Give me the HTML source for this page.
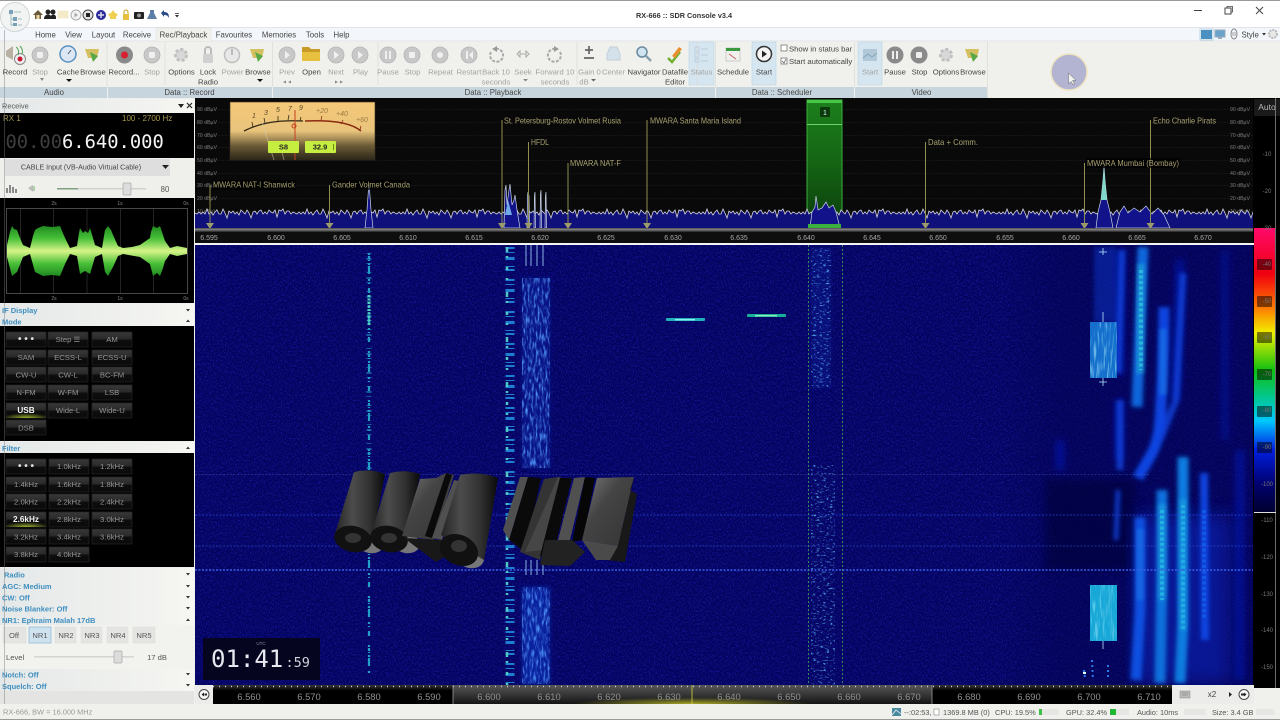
<!DOCTYPE html>
<html><head><meta charset="utf-8"><title>RX-666 :: SDR Console v3.4</title>
<style>
html,body{margin:0;padding:0;width:1280px;height:720px;overflow:hidden;background:#000}
svg{display:block}
text{font-family:"Liberation Sans",sans-serif}
.r{font-size:7.7px;fill:#444;text-anchor:middle}
.d{font-size:7.7px;fill:#a2a2a2;text-anchor:middle}
.g{font-size:7.8px;fill:#444;text-anchor:middle}
.h{font-size:7.5px;font-weight:bold;fill:#3f8fc0}
.b{font-size:7.7px;fill:#949494;text-anchor:middle}
.m{font-size:8.4px;fill:#a8a270}
.db{font-size:5.2px;fill:#7c7c7c}
.f{font-size:7px;fill:#a8a8a8;text-anchor:middle}
.a{font-size:9.4px;fill:#909090;text-anchor:middle}
.s{font-size:7.4px;fill:#555}
.c{font-size:6px;fill:#777;text-anchor:middle}
</style></head><body>
<svg width="1280" height="720" viewBox="0 0 1280 720" xmlns="http://www.w3.org/2000/svg">
<defs>
<linearGradient id="btn" x1="0" y1="0" x2="0" y2="1"><stop offset="0" stop-color="#383838"/><stop offset=".45" stop-color="#2a2a2a"/><stop offset=".55" stop-color="#0e0e0e"/><stop offset="1" stop-color="#0a0a0a"/></linearGradient>
<linearGradient id="hd" x1="0" y1="0" x2="1" y2="0"><stop offset="0" stop-color="#e4e8e8"/><stop offset="1" stop-color="#f6f6f2"/></linearGradient>
<linearGradient id="wave" x1="0" y1="226" x2="0" y2="276" gradientUnits="userSpaceOnUse"><stop offset="0" stop-color="#1f8a20"/><stop offset=".25" stop-color="#48c038"/><stop offset=".5" stop-color="#d8f488"/><stop offset=".75" stop-color="#48c038"/><stop offset="1" stop-color="#1f8a20"/></linearGradient>
<linearGradient id="cbar" x1="0" y1="228" x2="0" y2="512" gradientUnits="userSpaceOnUse">
<stop offset="0" stop-color="#ff0a6a"/><stop offset=".16" stop-color="#f00010"/><stop offset=".28" stop-color="#ff7a00"/><stop offset=".37" stop-color="#f0f000"/><stop offset=".5" stop-color="#10c010"/><stop offset=".62" stop-color="#00c8b0"/><stop offset=".68" stop-color="#00c8ff"/><stop offset=".78" stop-color="#0020e0"/><stop offset=".9" stop-color="#000070"/><stop offset="1" stop-color="#000030"/></linearGradient>
<linearGradient id="meter" x1="0" y1="0" x2="0" y2="1"><stop offset="0" stop-color="#f6c878"/><stop offset=".5" stop-color="#e8c47c"/><stop offset=".75" stop-color="#6e5c38"/><stop offset="1" stop-color="#2a2618"/></linearGradient>
<linearGradient id="grn" x1="0" y1="0" x2="0" y2="1"><stop offset="0" stop-color="#1c801c"/><stop offset=".5" stop-color="#146414"/><stop offset="1" stop-color="#0c3c0c"/></linearGradient>
<linearGradient id="axg" x1="0" y1="0" x2="0" y2="1"><stop offset="0" stop-color="#585858"/><stop offset="1" stop-color="#141414"/></linearGradient>
<linearGradient id="axb" x1="0" y1="0" x2="0" y2="1"><stop offset="0" stop-color="#383838"/><stop offset=".3" stop-color="#000"/><stop offset="1" stop-color="#000"/></linearGradient>
<linearGradient id="shade" x1="0" y1="0" x2="1" y2="0"><stop offset="0" stop-color="#020250" stop-opacity="0"/><stop offset=".25" stop-color="#020250" stop-opacity=".45"/><stop offset="1" stop-color="#020250" stop-opacity=".45"/></linearGradient>
<radialGradient id="yel" cx=".5" cy="1" r=".5"><stop offset="0" stop-color="#a8a828"/><stop offset="1" stop-color="#a8a828" stop-opacity="0"/></radialGradient>
<radialGradient id="act" cx=".5" cy="1" r=".6"><stop offset="0" stop-color="#9db030"/><stop offset="1" stop-color="#9db030" stop-opacity="0"/></radialGradient>
<linearGradient id="cyl" x1="0" y1="0" x2="1" y2="0"><stop offset="0" stop-color="#242424"/><stop offset=".35" stop-color="#4c4c4c"/><stop offset=".7" stop-color="#303030"/><stop offset="1" stop-color="#0a0a0a"/></linearGradient>
<linearGradient id="blk" x1="0" y1="0" x2="1" y2="1"><stop offset="0" stop-color="#7a7a7a"/><stop offset=".4" stop-color="#444"/><stop offset="1" stop-color="#343434"/></linearGradient>
<filter id="nz" x="0" y="0" width="100%" height="100%"><feTurbulence type="fractalNoise" baseFrequency=".75 .55" numOctaves="2" seed="7"/><feColorMatrix values="0 0 0 0 .02  0 0 0 0 .02  0 0 0 0 .62  1.5 0 0 0 -.68"/></filter>
<filter id="nz2" x="0" y="0" width="100%" height="100%"><feTurbulence type="fractalNoise" baseFrequency=".5 .12" numOctaves="2" seed="3"/><feColorMatrix values="0 0 0 0 .08  0 0 0 0 .3  0 0 0 0 .95  2.6 0 0 0 -1.15"/></filter>
<filter id="nz3" x="0" y="0" width="100%" height="100%"><feTurbulence type="fractalNoise" baseFrequency=".55 .05" numOctaves="2" seed="11"/><feColorMatrix values="0 0 0 0 .45  0 0 0 0 .9  0 0 0 0 1  3.5 0 0 0 -1.75"/></filter>
<filter id="nz4" x="0" y="0" width="100%" height="100%"><feTurbulence type="fractalNoise" baseFrequency=".3 .6" numOctaves="2" seed="21"/><feColorMatrix values="0 0 0 0 .1  0 0 0 0 .45  0 0 0 0 .9  4 0 0 0 -2.3"/></filter>
<filter id="bl2"><feGaussianBlur stdDeviation="2"/></filter>
<filter id="bl4"><feGaussianBlur stdDeviation="4"/></filter>
<filter id="bl8"><feGaussianBlur stdDeviation="9"/></filter>
<pattern id="sp" x="195" y="195" width="100" height="33" patternUnits="userSpaceOnUse">
<path d="M0 33V18L2 19 4 17 6 19 8 17 10 19 12 14 14 19 16 17 18 20 20 17 22 15 24 19 26 19 28 14 30 18 32 23 34 16 36 18 38 16 40 19 42 17 44 20 46 15 48 17 50 19 52 15 54 18 56 23 58 17 60 16 62 19 64 16 66 15 68 19 70 17 72 19 74 15 76 17 78 18 80 15 82 22 84 15 86 16 88 14 90 19 92 16 94 16 96 19 98 17 100 18V33z" fill="#10107a"/>
<path d="M0 18L2 19 4 17 6 19 8 17 10 19 12 14 14 19 16 17 18 20 20 17 22 15 24 19 26 19 28 14 30 18 32 23 34 16 36 18 38 16 40 19 42 17 44 20 46 15 48 17 50 19 52 15 54 18 56 23 58 17 60 16 62 19 64 16 66 15 68 19 70 17 72 19 74 15 76 17 78 18 80 15 82 22 84 15 86 16 88 14 90 19 92 16 94 16 96 19 98 17 100 18" fill="none" stroke="#d4d4e0" stroke-width=".8"/>
</pattern>
</defs>

<!-- chrome -->
<rect width="1280" height="720" fill="#f0f0ec"/>
<rect width="1280" height="1" fill="#9a9a9a"/>
<rect y="1" width="1280" height="26" fill="#fff"/>
<rect y="27" width="1280" height="14" fill="#f3f6fb"/>
<rect y="27" width="1280" height=".7" fill="#d8dce0"/>
<rect y="41" width="1280" height="57" fill="#f0f0ec"/>
<rect y="40.500" width="1280" height=".8" fill="#dfe2e6"/>
<rect x="156" y="28" width="55" height="13.500" fill="#f0f0ec" stroke="#e0e0e0" stroke-width=".5"/>
<text x="684" y="18" font-size="7.300" font-weight="bold" fill="#333" text-anchor="middle">RX-666 :: SDR Console v3.4</text>

<!-- orb -->
<circle cx="15" cy="17" r="14.500" fill="#f2f4f4" stroke="#d0d4d6"/>
<g fill="#7aa0b8"><rect x="9" y="10" width="4" height="4"/><rect x="13" y="17" width="4" height="4"/><rect x="13" y="23" width="4" height="3"/></g>
<g stroke="#8aa" stroke-width=".7" fill="none"><path d="M11 14V25H13M11 19H13M14 12H21M18 19H22M18 25H22"/></g>

<!-- QAT -->
<path d="M33 15l5-5 5 5h-2v4h-6v-4z" fill="#6a5a3a"/><rect x="36.500" y="15" width="3" height="4" fill="#e8d8a8"/>
<circle cx="48" cy="12" r="2.500" fill="#222"/><circle cx="53" cy="12" r="2.500" fill="#222"/><path d="M44 19c0-6 8-6 8 0zM50 19c0-6 7-6 6 0z" fill="#222"/>
<rect x="58" y="11" width="10" height="7" fill="#f4ecc8" stroke="#eee2b8" stroke-width=".5"/>
<circle cx="76" cy="15" r="5" fill="#f4f4f4" stroke="#aaa"/><path d="M74.500 12.500l3.500 2.500-3.500 2.500z" fill="#aaa"/>
<circle cx="88" cy="15" r="5" fill="#e4e4e4" stroke="#444"/><rect x="86" y="13" width="4" height="4" fill="#222"/>
<circle cx="101" cy="15" r="5" fill="#2a2a9a"/><path d="M98 15h6M101 12v6" stroke="#dde" stroke-width="1.500"/>
<path d="M113 10l2 3 3 1-2 3v2h-6v-2l-2-3 3-1z" fill="#f0d050"/>
<rect x="123" y="14" width="6" height="6" fill="#e8c040"/><path d="M124 14v-2a2 2 0 014 0v2" fill="none" stroke="#c8a020"/>
<rect x="134" y="12" width="10" height="7" rx="1" fill="#222"/><circle cx="139" cy="15.500" r="2" fill="#999"/>
<path d="M150 10h4v3l3 6h-10l3-6z" fill="#5a7ea8"/>
<path d="M161 13l3-3v2c4 0 5 2 5 6-1-2-2-3-5-3v2z" fill="#2a4a8a"/>
<path d="M175 15h4l-2 2.500z" fill="#333"/><rect x="175" y="13" width="4" height=".8" fill="#333"/>

<!-- tabs -->
<g font-size="7.800" fill="#444" text-anchor="middle">
<text x="45.500" y="37.500">Home</text><text x="73.500" y="37.500">View</text><text x="103.500" y="37.500">Layout</text><text x="137" y="37.500">Receive</text><text x="183.500" y="37.500">Rec/Playback</text><text x="234" y="37.500">Favourites</text><text x="279" y="37.500">Memories</text><text x="315" y="37.500">Tools</text><text x="341.500" y="37.500">Help</text>
</g>
<!-- window btns -->
<path d="M1194 10.500h8" stroke="#444" stroke-width="1"/>
<rect x="1225" y="8" width="6" height="6" fill="#fff" stroke="#444"/><path d="M1227 8v-1.500h5.500v5.500h-1.500" fill="none" stroke="#444" stroke-width=".8"/>
<path d="M1256 7l7 7M1263 7l-7 7" stroke="#444" stroke-width="1"/>
<rect x="1201" y="30" width="11" height="9" fill="#4a90c0"/><rect x="1200" y="29" width="13" height="11" fill="none" stroke="#b8d4e4"/>
<rect x="1215" y="30" width="10" height="7" fill="#6aa4cc" stroke="#9ab"/><rect x="1218" y="37" width="4" height="2" fill="#9ab"/>
<ellipse cx="1234" cy="34" rx="3" ry="5" fill="none" stroke="#888"/><path d="M1232 33h4M1232 35h4" stroke="#888" stroke-width=".7"/>
<text x="1241.500" y="37.500" font-size="7.800" fill="#444">Style</text><path d="M1262 33h4l-2 2.500z" fill="#333"/>
<circle cx="1273" cy="34" r="4" fill="#e8e8e8" stroke="#bbb" stroke-width="2" stroke-dasharray="2 1"/>

<!-- ribbon highlight -->
<rect x="689" y="42" width="25" height="43" fill="#d6e6f0" stroke="#b8d4e4" stroke-width=".6"/>
<rect x="752" y="42" width="24" height="43" fill="#d6e6f0" stroke="#b8d4e4" stroke-width=".6"/>
<rect x="858" y="42" width="24" height="43" fill="#d6e6f0" stroke="#b8d4e4" stroke-width=".6"/>
<!-- group labels -->
<rect y="87" width="107" height="11" fill="#c7d5de"/><rect x="108" y="87" width="164" height="11" fill="#c7d5de"/><rect x="273" y="87" width="442" height="11" fill="#c7d5de"/><rect x="716" y="87" width="138" height="11" fill="#c7d5de"/><rect x="855" y="87" width="132" height="11" fill="#c7d5de"/>
<g stroke="#dcdcd8" stroke-width=".8"><path d="M107 42V87M272.500 42V87M715.500 42V87M854.500 42V87M987.500 42V98M165 42V85M378 42V85M697 42V85M577 42V85"/></g>
<text class="g" x="54" y="95">Audio</text><text class="g" x="189.500" y="95">Data :: Record</text><text class="g" x="493" y="95">Data :: Playback</text><text class="g" x="782" y="95">Data :: Scheduler</text><text class="g" x="921.500" y="95">Video</text>

<!-- ribbon icons -->
<g fill="#c8c8c8" stroke="#b4b4b4" stroke-width=".8">
<circle cx="40" cy="55" r="8"/><circle cx="152" cy="55" r="8"/><circle cx="287" cy="55" r="8"/><circle cx="336" cy="55" r="8"/><circle cx="360" cy="55" r="8"/><circle cx="388" cy="55" r="8"/><circle cx="412" cy="55" r="8"/><circle cx="440" cy="55" r="8"/><circle cx="469" cy="55" r="8"/>
</g>
<g fill="#f0f0f0">
<rect x="37" y="52" width="6" height="6" rx="1"/><rect x="149" y="52" width="6" height="6" rx="1"/><path d="M285 51l5 4-5 4zM334 51l5 4-5 4zM358 51l5 4-5 4z"/><rect x="385" y="51" width="2" height="8"/><rect x="389" y="51" width="2" height="8"/><rect x="409" y="52" width="6" height="6" rx="1"/><circle cx="440" cy="55" r="3"/><path d="M466 51h2v8h-2zM473 51l-4 4 4 4z"/>
</g>
<!-- Record audio -->
<path d="M6 51l7-5v14l-7-4z" fill="#b8b0a0"/><circle cx="20" cy="59" r="5.500" fill="#eee" stroke="#888"/><circle cx="20" cy="59" r="2.500" fill="#c81830"/><path d="M16 47c3 2 3 6 2 8M20 46c2 2 3 5 2 8" stroke="#4aa050" fill="none"/>
<path d="M40 78h4l-2 3z" fill="#888"/>
<!-- cache -->
<circle cx="68" cy="54" r="8" fill="#dbe8f4" stroke="#5a90c0" stroke-width="1.500"/><path d="M68 54l3-4" stroke="#557"/><path d="M66 79h6l-3 3z" fill="#111"/>
<!-- browse -->
<path d="M85 49h14l-2 9h-9z" fill="#d4c060"/><path d="M90 52l8 4-5 6z" fill="#58a848"/>
<path d="M250 49h14l-2 9h-9z" fill="#d4c060"/><path d="M255 52l8 4-5 6z" fill="#58a848"/><path d="M257 79h6l-3 3z" fill="#111"/>
<path d="M965 49h14l-2 9h-9z" fill="#d4c060"/><path d="M970 52l8 4-5 6z" fill="#58a848"/>
<!-- record data -->
<circle cx="124.500" cy="55" r="8.500" fill="#8a8a8a"/><circle cx="124.500" cy="55" r="3.500" fill="#d82030"/>
<!-- options -->
<circle cx="181" cy="55" r="5.500" fill="#d8d8d8" stroke="#c0c0c0" stroke-width="3" stroke-dasharray="3 2"/>
<circle cx="946" cy="55" r="5.500" fill="#d8d8d8" stroke="#c0c0c0" stroke-width="3" stroke-dasharray="3 2"/>
<!-- lock -->
<rect x="203" y="54" width="10" height="9" rx="1" fill="#d0d0d0"/><path d="M205 54v-4a3 3 0 016 0v4" fill="none" stroke="#bbb" stroke-width="2"/>
<!-- power -->
<circle cx="232" cy="55" r="7.500" fill="#e8e8e8" stroke="#c0c0c0" stroke-width="1.500"/><path d="M232 49v6" stroke="#bbb" stroke-width="2"/>
<path d="M283 82l3-1.500v3zM288 82l3-1.500v3z" fill="#888"/><path d="M335 80.500l3 1.500-3 1.500zM340 80.500l3 1.500-3 1.500z" fill="#888"/>
<!-- open -->
<path d="M302 47h7l2 2h9v12h-18z" fill="#c89a28"/><path d="M302 52h18v9h-18z" fill="#e8c040"/>
<!-- back/fwd -->
<path d="M491 52a6.500 6.500 0 104-3" fill="none" stroke="#a8a8a8" stroke-width="2" stroke-dasharray="3 1.500"/><path d="M497 46l-5 3 5 3z" fill="#999"/>
<path d="M560 52a6.500 6.500 0 11-4-3" fill="none" stroke="#a8a8a8" stroke-width="2" stroke-dasharray="3 1.500"/><path d="M554 46l5 3-5 3z" fill="#999"/>
<path d="M517 54l3-3v6zM529 54l-3-3v6z" fill="none" stroke="#aaa"/><path d="M520 54h6" stroke="#aaa"/>
<path d="M523 79h5l-2.500 2.500z" fill="#888"/>
<!-- gain -->
<path d="M585 50h8M589 46v8M584 58h10" stroke="#666" stroke-width="1.700"/>
<path d="M591 79h5l-2.500 2.500z" fill="#666"/>
<!-- center -->
<path d="M607 60v-6l3-7h7l3 7v6z" fill="#d4e0ea" stroke="#c4d0d8"/>
<!-- nav -->
<circle cx="642" cy="52" r="5" fill="#cfe4f0" stroke="#6a8aa0" stroke-width="1.500"/><path d="M646 56l5 5" stroke="#8aa0b0" stroke-width="2.500"/>
<!-- editor -->
<path d="M668 58l4 4 8-10" fill="none" stroke="#70b030" stroke-width="2.500"/><path d="M672 56l7-9 3 2-7 9z" fill="#e89030"/>
<!-- status -->
<g fill="none" stroke="#bcd" stroke-width=".9"><rect x="695" y="47" width="4" height="4"/><rect x="695" y="53" width="4" height="4"/><rect x="695" y="59" width="4" height="3"/><path d="M701 49h7M701 55h7M701 61h7"/></g>
<!-- schedule -->
<rect x="726" y="48" width="14" height="13" fill="#f2f0ee" stroke="#aaa" stroke-width=".5"/><rect x="726" y="48" width="14" height="3" fill="#3a9a40"/><path d="M729 54l7 5" stroke="#c06060"/>
<circle cx="764" cy="54" r="7.500" fill="#f4f4f4" stroke="#333" stroke-width="1.500"/><path d="M762 50.500l5 3.500-5 3.500z" fill="#222"/>
<!-- checks -->
<rect x="781" y="45" width="6" height="6" fill="#fff" stroke="#666" stroke-width=".7"/><rect x="781" y="58" width="6" height="6" fill="#fff" stroke="#666" stroke-width=".7"/><path d="M782 61l2 2 2-4" fill="none" stroke="#555" stroke-width=".7"/>
<text x="789" y="51.500" font-size="7.700" fill="#444">Show in status bar</text><text x="789" y="64" font-size="7.700" fill="#444">Start automatically</text>
<!-- video -->
<rect x="863" y="49" width="14" height="12" fill="#b0c8d8"/><path d="M863 58l5-4 4 3 5-4" stroke="#8aa8b8" fill="none"/>
<circle cx="895" cy="55" r="8.500" fill="#8a8a8a"/><rect x="892" y="51" width="2" height="8" fill="#eee"/><rect x="896" y="51" width="2" height="8" fill="#eee"/>
<circle cx="919" cy="55" r="8.500" fill="#8a8a8a"/><rect x="916" y="52" width="6" height="6" rx="1" fill="#eee"/>

<!-- ribbon text -->
<text class="r" x="15" y="74.500">Record</text><text class="d" x="40" y="74.500">Stop</text><text class="r" x="68" y="74.500">Cache</text><text class="r" x="93" y="74.500">Browse</text>
<text class="r" x="124" y="74.500">Record...</text><text class="d" x="152" y="74.500">Stop</text><text class="r" x="181.500" y="74.500">Options</text><text class="r" x="208" y="74.500">Lock</text><text class="r" x="208" y="84.500">Radio</text><text class="d" x="232.500" y="74.500">Power</text><text class="r" x="258" y="74.500">Browse</text>
<text class="d" x="287" y="74.500">Prev</text><text class="r" x="311.500" y="74.500">Open</text><text class="d" x="336" y="74.500">Next</text><text class="d" x="360.500" y="74.500">Play</text><text class="d" x="388" y="74.500">Pause</text><text class="d" x="412.500" y="74.500">Stop</text><text class="d" x="440.500" y="74.500">Repeat</text><text class="d" x="469" y="74.500">Restart</text>
<text class="d" x="496" y="74.500">Back 10</text><text class="d" x="496" y="84.500">seconds</text><text class="d" x="523" y="74.500">Seek</text><text class="d" x="555" y="74.500">Forward 10</text><text class="d" x="555" y="84.500">seconds</text><text class="d" x="589.500" y="74.500">Gain 0</text><text class="d" x="584" y="84.500">dB</text><text class="d" x="613.500" y="74.500">Center</text><text class="r" x="644" y="74.500">Navigator</text><text class="r" x="675" y="74.500">Datafile</text><text class="r" x="675" y="84.500">Editor</text><text class="d" x="701.500" y="74.500">Status</text>
<text class="r" x="733" y="74.500">Schedule</text><text class="r" x="764" y="74.500">Start</text>
<text class="d" x="870" y="74.500">Start</text><text class="r" x="895" y="74.500">Pause</text><text class="r" x="919.500" y="74.500">Stop</text><text class="r" x="946" y="74.500">Options</text><text class="r" x="973" y="74.500">Browse</text>

<!-- cursor circle -->
<circle cx="1069" cy="72" r="18" fill="#b2b4d2" stroke="#efe4c0" stroke-width="1.500"/>
<path d="M1068.500 73v11l2.500-2.500 2 3.500 1.500-1-2-3.500h3.500z" fill="#f2f2f2" stroke="#666" stroke-width=".5"/>

<!-- main black -->
<rect x="195" y="98" width="1085" height="590" fill="#000"/>
<rect x="195" y="98" width="1058" height="130" fill="#090909"/>

<!-- spectrum grid -->
<g stroke="#2a2a2a" stroke-width=".6" stroke-dasharray="1.500 1.500"><path d="M195 109.500H1253M195 122.500H1253M195 135.500H1253M195 147.500H1253M195 160.500H1253M195 173.500H1253M195 185.500H1253M195 198.500H1253M195 211.500H1253"/></g>
<g>
<text class="db" x="197" y="111">90 dBµV</text><text class="db" x="197" y="124">80 dBµV</text><text class="db" x="197" y="137">70 dBµV</text><text class="db" x="197" y="149">60 dBµV</text><text class="db" x="197" y="162">50 dBµV</text><text class="db" x="197" y="175">40 dBµV</text><text class="db" x="197" y="187">30 dBµV</text><text class="db" x="197" y="200">20 dBµV</text><text class="db" x="197" y="213">10 dBµV</text>
<text class="db" x="1230" y="111">90 dBµV</text><text class="db" x="1230" y="124">80 dBµV</text><text class="db" x="1230" y="137">70 dBµV</text><text class="db" x="1230" y="149">60 dBµV</text><text class="db" x="1230" y="162">50 dBµV</text><text class="db" x="1230" y="175">40 dBµV</text><text class="db" x="1230" y="187">30 dBµV</text><text class="db" x="1230" y="200">20 dBµV</text><text class="db" x="1230" y="213">10 dBµV</text><text class="db" x="1234" y="225">0 dBµV</text>
</g>

<!-- green filter behind -->
<rect x="807" y="100" width="35" height="128" fill="url(#grn)" stroke="#3cb03c" stroke-width="1"/>
<rect x="807" y="100" width="35" height="3" fill="#46c846"/>
<rect x="807" y="124" width="35" height="1" fill="#70d070"/>
<rect x="820" y="107" width="10" height="10" rx="1" fill="#0c3a0c"/><text x="825" y="115" font-size="7" fill="#cfe" text-anchor="middle">1</text>

<!-- spectrum -->
<rect x="195" y="195" width="1058" height="33" fill="url(#sp)"/>
<g fill="#12128a" stroke="#c8d4e4" stroke-width=".7">
<path d="M365 228L367 210 368 196 369 183 370 196 371 210 373 228z"/>
<path d="M504 228L505 190 506 185 507 205 509 190 510 184 512 205 514 200 515 195 517 210 520 228z"/>
<path d="M527 228L527.500 196 528 192 529 196 529.500 228zM534 228L534.500 196 535 192 535.500 228zM540 228L540.500 194 541 190 541.500 228zM545 228L545.500 196 546 192 546.500 228z"/>
<path d="M810 228L812 212 815 207 816 196 818 210 822 208 826 202 829 208 833 205 836 212 840 228z"/>
<path d="M1096 228L1098 212 1101 200 1103 180 1104 166 1105 180 1107 200 1110 212 1113 228z"/>
<path d="M1116 228L1120 212 1124 206 1128 213 1134 208 1140 212 1146 206 1152 214 1158 208 1164 215 1170 228z"/>
</g>
<path d="M1101 200L1103 180 1104 166 1105 180 1107 200z" fill="#7fd8c8"/>
<path d="M505 215L508 200 512 215z" fill="#70a8e8"/>

<!-- markers -->
<g stroke="#8f8f50" stroke-width="1" fill="none">
<path d="M210 185V224M329.500 185V224M502 120V224M528.500 142V224M568 163V224M647 120V224M925.500 142V224M1084.500 163V224M1150.500 120V224"/>
</g>
<g fill="#9a9a6a">
<path d="M206 223h8l-4 6zM325.500 223h8l-4 6zM498 223h8l-4 6zM524.500 223h8l-4 6zM564 223h8l-4 6zM643 223h8l-4 6zM921.500 223h8l-4 6zM1080.500 223h8l-4 6zM1146.500 223h8l-4 6z"/>
</g>
<rect x="212" y="180" width="84" height="10" fill="#000" opacity=".7"/>
<rect x="331" y="180" width="80" height="10" fill="#000" opacity=".7"/>
<rect x="1086" y="158" width="94" height="10" fill="#000" opacity=".7"/>
<text class="m" x="213" y="187.500" textLength="82" lengthAdjust="spacingAndGlyphs">MWARA NAT-I Shanwick</text>
<text class="m" x="332" y="187.500" textLength="78" lengthAdjust="spacingAndGlyphs">Gander Volmet Canada</text>
<text class="m" x="504" y="123.500" textLength="117" lengthAdjust="spacingAndGlyphs">St. Petersburg-Rostov Volmet Rusia</text>
<text class="m" x="531" y="145" textLength="18" lengthAdjust="spacingAndGlyphs">HFDL</text>
<text class="m" x="570" y="166" textLength="51" lengthAdjust="spacingAndGlyphs">MWARA NAT-F</text>
<text class="m" x="650" y="123.500" textLength="91" lengthAdjust="spacingAndGlyphs">MWARA Santa Maria Island</text>
<text class="m" x="928" y="145" textLength="50" lengthAdjust="spacingAndGlyphs">Data + Comm.</text>
<text class="m" x="1087" y="166" textLength="92" lengthAdjust="spacingAndGlyphs">MWARA Mumbai (Bombay)</text>
<text class="m" x="1153" y="123.500" textLength="63" lengthAdjust="spacingAndGlyphs">Echo Charlie Pirats</text>
<rect x="808" y="224" width="33" height="4" fill="#3cb03c"/>

<!-- S meter -->
<rect x="230" y="102" width="145" height="58" fill="url(#meter)" stroke="#3a3020" stroke-width=".6"/>
<path d="M244 131C262 122 280 120 303 121" fill="none" stroke="#332a18" stroke-width="1.300"/>
<path d="M305 121C330 120 350 122 361 131" fill="none" stroke="#8a2a10" stroke-width="1.500"/>
<path d="M253 127l-1-5M265 123l-1-5M278 121v-5M288 120l1-5M300 121l1-4" stroke="#332a18" stroke-width=".8"/>
<path d="M321 120l1-4M341 124l2-4M360 130l1-4" stroke="#8a2a10" stroke-width=".8"/>
<g font-size="7" font-style="italic" fill="#5a4a28"><text x="252" y="118">1</text><text x="264" y="115">3</text><text x="276" y="112">5</text><text x="288" y="111">7</text><text x="299" y="110">9</text><text x="316" y="113" fill="#9a7a40">+20</text><text x="336" y="116" fill="#9a7a40">+40</text><text x="356" y="122" fill="#9a7a40">+60</text></g>
<path d="M295 160l0-50" stroke="#c84020" stroke-width="1"/><circle cx="294" cy="126" r="2" fill="none" stroke="#c84020" stroke-width="1"/>
<path d="M262 122l12 38M284 160l-2-8" stroke="#d0d0b0" stroke-width="1" opacity=".5"/>
<rect x="268" y="141" width="31" height="12" rx="1" fill="#c6ee40"/><text x="283.500" y="149.500" font-size="7.500" font-weight="bold" fill="#222" text-anchor="middle">S8</text>
<rect x="305" y="141" width="31" height="12" rx="1" fill="#c6ee40"/><text x="320" y="149.500" font-size="7.500" font-weight="bold" fill="#222" text-anchor="middle">32.9</text><path d="M333.500 144v6" stroke="#6a8a20"/>

<!-- freq axis -->
<rect x="195" y="228" width="1058" height="15" fill="#0e0e0e"/>
<rect x="195" y="228" width="1058" height="3.500" fill="#5c5c5c"/>
<rect x="195" y="229" width="1058" height="1" fill="#aaa" opacity=".4"/>
<g>
<text class="f" x="209" y="240">6.595</text><text class="f" x="276" y="240">6.600</text><text class="f" x="342" y="240">6.605</text><text class="f" x="408" y="240">6.610</text><text class="f" x="474" y="240">6.615</text><text class="f" x="540" y="240">6.620</text><text class="f" x="606" y="240">6.625</text><text class="f" x="673" y="240">6.630</text><text class="f" x="739" y="240">6.635</text><text class="f" x="806" y="240">6.640</text><text class="f" x="872" y="240">6.645</text><text class="f" x="938" y="240">6.650</text><text class="f" x="1005" y="240">6.655</text><text class="f" x="1071" y="240">6.660</text><text class="f" x="1137" y="240">6.665</text><text class="f" x="1203" y="240">6.670</text>
</g>
<rect x="195" y="243" width="1059" height="2" fill="#f4f4f4"/>

<!-- waterfall -->
<rect x="195" y="245" width="1058" height="440" fill="#03035e"/>
<rect x="195" y="245" width="1058" height="440" filter="url(#nz)"/>
<rect x="1000" y="245" width="253" height="440" fill="url(#shade)"/>
<rect x="1045" y="480" width="90" height="90" fill="#010130" opacity=".5" filter="url(#bl4)"/>
<g stroke="#0a1ee0" fill="none" filter="url(#bl4)">
<path d="M1120 250V375M1119 400V460M1060 440V470M1240 450V680M1180 260L1175 400" stroke-width="6" opacity=".6"/>
<path d="M1225 250V440" stroke-width="8" opacity=".3"/>
</g>
<rect x="1135" y="515" width="95" height="168" fill="#0828c0" opacity=".55" filter="url(#bl8)"/>
<!-- wavy bands -->
<g fill="none" stroke="#0a44e0" stroke-width="11" filter="url(#bl2)">
<path d="M1143 247C1141 290 1140 340 1137 407" stroke="#1066dc"/>
<path d="M1164 307C1164 350 1162 390 1160 420S1150 455 1138 478"/>
<path d="M1140 517V610L1136 680" stroke="#0c50e0"/>
<path d="M1162 490V573L1160 683" stroke="#1070dc"/>
<path d="M1183 457V623L1180 683" stroke="#107ce0"/>
<path d="M1204 473L1205 640" stroke-width="8"/>
<path d="M1183 273L1176 400 1160 440" stroke-width="7" opacity=".8"/>
<path d="M1122 250L1118 373" stroke-width="7" opacity=".8"/>
<path d="M1120 400V470" stroke-width="7" opacity=".8"/>
<path d="M1118 490L1116 540" stroke-width="5" opacity=".8"/>
</g>
<g fill="none" stroke-width="7" stroke-dasharray="3 2.500" filter="url(#bl2)" opacity=".9">
<path d="M1141 265C1140 300 1140 340 1140 375" stroke="#28c0d8"/>
<path d="M1163 330V395" stroke="#1c90e8"/>
<path d="M1162 505V600" stroke="#20b8e0"/>
<path d="M1183 500V630" stroke="#1cacde"/>
<path d="M1140 530V600" stroke="#1a80e8"/>
</g>
<g fill="none" stroke-width="4" stroke-dasharray="3 2.500" opacity=".7">
<path d="M1141 270V370" stroke="#30c8e0"/>
<path d="M1162 510V600" stroke="#28c0e8"/>
<path d="M1183 505V630" stroke="#28b8e8"/>
<path d="M1204 510V620" stroke="#1464e8"/>
</g>
<!-- block signals -->
<rect x="1090" y="322" width="27" height="56" fill="#1470cc"/>
<rect x="1090" y="322" width="27" height="56" filter="url(#nz3)" opacity=".55"/>
<rect x="1090" y="585" width="27" height="56" fill="#18a8d8"/>
<rect x="1090" y="585" width="27" height="56" filter="url(#nz3)" opacity=".5"/>
<rect x="1094" y="247" width="22" height="75" fill="#0a3ad0" opacity=".45" filter="url(#bl2)"/>
<path d="M1103 248v7M1099 252h8M1103 312v10M1103 378v8M1099 382h8M1103 641v8" stroke="#b8e8ff" stroke-width=".8"/>
<path d="M1092 660l1 20M1084 670l1 8M1108 665v14" stroke="#2a7ae8" stroke-width="2" stroke-dasharray="2 3"/>
<rect x="1083" y="672" width="3" height="2" fill="#dff"/>
<!-- horizontal lines -->
<g stroke-dasharray="2 1.500" fill="none">
<path d="M195 474.500H1150" stroke="#6a88d8" stroke-width=".6" opacity=".55"/>
<path d="M195 515H1253" stroke="#2a50e8" stroke-width="1.200" opacity=".5"/>
<path d="M195 546H1253" stroke="#3a60e8" stroke-width="1" opacity=".5"/>
<path d="M195 570H1253" stroke="#3a60e8" stroke-width="1.700" opacity=".85"/>
</g>
<!-- 6.580 signal -->
<path d="M369 253V675" stroke="#22a0c8" stroke-width="2.200" stroke-dasharray="2 1 3 1 1 2 2 1 8 5 2 2 1 4 5 9"/>
<path d="M369 253V470" stroke="#2090c4" stroke-width="5" stroke-dasharray="1 4 2 3 1 8" opacity=".6"/>
<path d="M369 295v30" stroke="#50d0c0" stroke-width="3" stroke-dasharray="2 1.500"/>
<!-- 6.617 signals -->
<path d="M510 247V685" stroke="#1c80d0" stroke-width="9" stroke-dasharray="2 3 1 4 3 6 1 2 2 8"/>
<path d="M507 247V685" stroke="#50c8c8" stroke-width="2.500" stroke-dasharray="5 4 2 9 3 8 2 12"/>
<path d="M526 245V266M531 245V266M537 245V266M543 245V266" stroke="#9ac4f0" stroke-width=".9"/>
<path d="M526 560V575M531 560V575M537 560V575M543 560V575" stroke="#9ac4f0" stroke-width=".9"/>
<rect x="522" y="278" width="28" height="190" fill="#0a2cb0" opacity=".4" filter="url(#bl2)"/>
<rect x="522" y="278" width="28" height="190" filter="url(#nz2)"/>
<rect x="522" y="587" width="28" height="97" fill="#0a38c8" opacity=".55" filter="url(#bl2)"/>
<rect x="522" y="587" width="28" height="97" filter="url(#nz2)"/>
<!-- short carriers -->
<rect x="666" y="318" width="39" height="3" fill="#20b0b8" rx="1"/><rect x="675" y="319" width="20" height="1.400" fill="#8ee"/>
<rect x="747" y="314" width="39" height="3" fill="#18b098" rx="1"/><rect x="755" y="315" width="22" height="1.400" fill="#8eb"/>
<!-- 6.640 -->
<rect x="811" y="248" width="20" height="140" fill="#0a28a0" opacity=".3" filter="url(#bl2)"/>
<rect x="811" y="248" width="20" height="140" filter="url(#nz4)"/>
<rect x="811" y="465" width="24" height="220" filter="url(#nz4)"/>
<path d="M808.500 245V685M842.500 245V685" stroke="#3fa860" stroke-width=".8" stroke-dasharray="2 2"/>

<!-- 3D logo -->
<g>
<ellipse cx="370" cy="543" rx="14" ry="10" fill="#777" transform="rotate(12 370 543)"/>
<ellipse cx="406" cy="543" rx="14" ry="10" fill="#777" transform="rotate(12 406 543)"/>
<ellipse cx="470" cy="558" rx="14" ry="10" fill="#777" transform="rotate(12 470 558)"/>
<path d="M354 472Q370 468 385 474L372 540 335 534z" fill="url(#cyl)"/>
<ellipse cx="353" cy="539" rx="19" ry="13" fill="#111" transform="rotate(12 353 539)"/><ellipse cx="353" cy="538" rx="8" ry="5" fill="#333"/>
<path d="M390 473Q405 469 420 474L407 540 371 534z" fill="url(#cyl)"/>
<ellipse cx="389" cy="539" rx="19" ry="13" fill="#111" transform="rotate(12 389 539)"/><ellipse cx="389" cy="538" rx="8" ry="5" fill="#333"/>
<path d="M420 479L436 478 446 473 454 475 434 540 402 536z" fill="url(#blk)"/>
<path d="M446 473L452 475 432 538 425 536z" fill="#0a0a0a"/>
<path d="M454 480L459 481 442 540 432 538z" fill="#505050"/>
<path d="M404 538L442 540 446 556 436 562 420 550z" fill="#181818"/>
<path d="M460 475Q480 471 498 478L484 560 441 535z" fill="url(#cyl)"/>
<ellipse cx="459" cy="550" rx="20" ry="15" fill="#111" transform="rotate(25 459 550)"/><ellipse cx="459" cy="546" rx="8" ry="6" fill="#333"/>
<path d="M520 477L528 477 509 540 503 530z" fill="#505050"/>
<path d="M528 477L541 478 525 552 509 540z" fill="#0a0a0a"/>
<path d="M544 479L558 477 540 560 520 552z" fill="#343434"/>
<path d="M558 477L572 480 566 490 560 490 556 495 543 550 525 552z" fill="#464646"/>
<path d="M560 478H572L552 560 540 556z" fill="#0a0a0a"/>
<path d="M574 478L585 477 570 540 558 540z" fill="#505050"/>
<path d="M585 477L595 478 583 540 572 542z" fill="#060606"/>
<path d="M597 478L634 477 618 546 582 540z" fill="url(#blk)"/>
<path d="M634 477L630 490 637 494 625 562 606 560 618 546z" fill="#181818"/>
<path d="M545 540L572 540 585 552 570 566 540 565z" fill="#222"/>
<path d="M582 540L618 546 610 560 596 560z" fill="#4a4a4a"/>
</g>

<!-- clock -->
<rect x="203" y="638" width="117" height="42" rx="1" fill="#050520"/>
<text x="261" y="645" font-size="4.500" fill="#889" text-anchor="middle">UTC</text>
<text x="211" y="667" style="font-family:'DejaVu Sans Mono',monospace" font-size="24" fill="#e8e8f0">01:41</text>
<text x="285.500" y="667" style="font-family:'DejaVu Sans Mono',monospace" font-size="13.500" fill="#d0d0d8">:59</text>

<!-- right scale -->
<rect x="1254" y="98" width="26" height="590" fill="#000"/>
<rect x="1254" y="228" width="21" height="284" fill="url(#cbar)"/>
<rect x="1254" y="99" width="26" height="17" fill="#1a1a1a"/>
<text x="1267" y="110" font-size="8.500" fill="#b8b8b8" text-anchor="middle">Auto</text>
<path d="M1275.500 98V688" stroke="#888" stroke-width=".8"/>
<rect x="1254" y="512" width="22" height="1" fill="#ddd"/>
<g fill="#000" opacity=".5"><rect x="1257" y="259" width="15" height="11" rx="1"/><rect x="1257" y="296" width="15" height="11" rx="1"/><rect x="1257" y="332" width="15" height="11" rx="1"/><rect x="1257" y="369" width="15" height="11" rx="1"/><rect x="1257" y="406" width="15" height="11" rx="1"/><rect x="1257" y="442" width="15" height="11" rx="1"/></g>
<g>
<text class="c" x="1267" y="156">-10</text><text class="c" x="1267" y="193">-20</text><text class="c" x="1267" y="230">-30</text><text class="c" x="1267" y="266">-40</text><text class="c" x="1267" y="303">-50</text><text class="c" x="1267" y="339">-60</text><text class="c" x="1267" y="376">-70</text><text class="c" x="1267" y="412">-80</text><text class="c" x="1267" y="449">-90</text><text class="c" x="1267" y="486">-100</text><text class="c" x="1267" y="522">-110</text><text class="c" x="1267" y="559">-120</text><text class="c" x="1267" y="596">-130</text><text class="c" x="1267" y="632">-140</text><text class="c" x="1267" y="669">-150</text>
</g>

<!-- bottom axis -->
<rect x="195" y="685" width="18" height="19" fill="#ececea"/>
<circle cx="204" cy="694.500" r="5" fill="#f8f8f8" stroke="#444" stroke-width="1"/><path d="M201.500 694.500l2.500-2v4zM204.500 693.500h2.500v2h-2.500z" fill="#222"/>
<rect x="213" y="685" width="240" height="19" fill="url(#axb)"/>
<rect x="453" y="685" width="479" height="19" fill="url(#axg)"/>
<rect x="932" y="685" width="240" height="19" fill="url(#axb)"/>
<rect x="572" y="691" width="240" height="13" fill="url(#yel)"/>
<rect x="1172" y="685" width="82" height="19" fill="#ececea"/>
<path d="M213 686.500H1172" stroke="#c8c8c8" stroke-width="1.500" stroke-dasharray="1 5"/>
<path d="M453 685V704M932 685V704" stroke="#999" stroke-width=".8"/><path d="M692 685V704" stroke="#c8c840" stroke-width=".9"/>
<g>
<text class="a" x="249" y="700">6.560</text><text class="a" x="309" y="700">6.570</text><text class="a" x="369" y="700">6.580</text><text class="a" x="429" y="700">6.590</text><text class="a" x="489" y="700">6.600</text><text class="a" x="549" y="700">6.610</text><text class="a" x="609" y="700">6.620</text><text class="a" x="669" y="700">6.630</text><text class="a" x="729" y="700">6.640</text><text class="a" x="789" y="700">6.650</text><text class="a" x="849" y="700">6.660</text><text class="a" x="909" y="700">6.670</text><text class="a" x="969" y="700">6.680</text><text class="a" x="1029" y="700">6.690</text><text class="a" x="1089" y="700">6.700</text><text class="a" x="1149" y="700">6.710</text>
</g>
<rect x="1180" y="691" width="10" height="7" fill="#bbb" stroke="#888" stroke-width=".5"/><path d="M1182 693h6M1182 695h6" stroke="#777" stroke-width=".6"/>
<text x="1212" y="697" font-size="8" fill="#444" text-anchor="middle">x2</text>
<path d="M1229 692l3 2.500-3 2.500z" fill="#222"/>
<circle cx="1244" cy="694.500" r="5" fill="#f8f8f8" stroke="#444" stroke-width="1"/><path d="M1246.500 694.500l-2.500-2v4zM1241 693.500h3v2h-3z" fill="#222"/>

<!-- LEFT PANEL -->
<rect x="0" y="98" width="194" height="606" fill="#efefeb"/>
<rect x="0" y="99" width="194" height="14" fill="url(#hd)"/>
<text x="2" y="108.500" font-size="7.400" fill="#555">Receive</text>
<path d="M178 104h6l-3 4z" fill="#222"/><path d="M187 103l5 5M192 103l-5 5" stroke="#222" stroke-width="1.200"/>
<rect x="0" y="113" width="194" height="45" fill="#000"/>
<text x="3" y="121" font-size="8" fill="#a89a50">RX 1</text>
<text x="122" y="121" font-size="8" fill="#a89a50">100 - 2700 Hz</text>
<text x="5.500" y="148" style="font-family:'DejaVu Sans Mono',monospace" font-size="18.800" fill="#3e3e3e">00.00</text>
<text x="62" y="148" style="font-family:'DejaVu Sans Mono',monospace" font-size="18.800" fill="#f4f4f4">6.640.000</text>
<rect x="5" y="159" width="165" height="17" fill="#dedede"/>
<text x="81" y="169.500" font-size="7.100" fill="#444" text-anchor="middle">CABLE Input (VB-Audio Virtual Cable)</text>
<path d="M162 165h7l-3.500 4z" fill="#222"/>
<path d="M7 193v-5M10 193v-8M13 193v-6M16 193v-4" stroke="#888" stroke-width="2"/>
<path d="M28 188l5-3v7z" fill="#bbb"/><path d="M34 186v5" stroke="#6ab06a"/>
<rect x="57" y="188" width="89" height="1.500" fill="#d0d0d0"/><rect x="57" y="188" width="21" height="1.500" fill="#80a080"/>
<rect x="123" y="183" width="8" height="12" rx="1" fill="#dcdcdc" stroke="#aaa" stroke-width=".7"/>
<text x="165" y="192" font-size="7.800" fill="#555" text-anchor="middle">80</text>

<rect x="0" y="198" width="194" height="105" fill="#000"/>
<rect x="6.500" y="208.500" width="181" height="85" fill="none" stroke="#5a5a5a" stroke-width=".8"/>
<path d="M20.500 209V293M53.500 209V293M87 209V293M120.500 209V293M153.500 209V293" stroke="#333" stroke-width=".7"/>
<g font-size="5" fill="#888" text-anchor="middle"><text x="54" y="205">2s</text><text x="120" y="205">1s</text><text x="186" y="205">0s</text><text x="54" y="300">2s</text><text x="120" y="300">1s</text><text x="186" y="300">0s</text></g>
<path d="M7 245L10 232 12 226 14 229 17 230 20 238 23 245 30 248 33 236 35 230 38 228 43 226 52 227 60 226 62 231 65 238 70 248 77 246 79 233 80 228 83 233 85 231 88 233 90 228 93 238 95 245 102 248 104 236 105 230 108 226 111 230 113 235 118 246 123 248 132 247 140 245 150 238 151 232 153 226 157 228 160 226 163 235 165 241 170 248 177 246 187 248V254L177 256 170 254 165 261 163 268 160 276 157 273 153 276 150 264 140 257 123 254 118 256 113 267 108 276 105 272 102 254 95 257 90 274 85 271 80 274 77 256 70 254 65 264 60 276 52 275 43 276 35 272 30 254 23 257 17 272 12 276 7 257z" fill="url(#wave)"/>

<!-- sections -->
<rect x="0" y="303.500" width="194" height="23" fill="url(#hd)"/>
<text class="h" x="2" y="313">IF Display</text><text class="h" x="2" y="324.500">Mode</text>
<path d="M186 309h4l-2 2.500z" fill="#333"/><path d="M186 322h4l-2-2.500z" fill="#333"/>
<rect x="0" y="326" width="194" height="115" fill="#000"/>
<g fill="url(#btn)" stroke="#262626" stroke-width=".7">
<rect x="6" y="332" width="40" height="15"/><rect x="48" y="332" width="40" height="15"/><rect x="92" y="332" width="40" height="15"/>
<rect x="6" y="350" width="40" height="15"/><rect x="48" y="350" width="40" height="15"/><rect x="92" y="350" width="40" height="15"/>
<rect x="6" y="367" width="40" height="15"/><rect x="48" y="367" width="40" height="15"/><rect x="92" y="367" width="40" height="15"/>
<rect x="6" y="385" width="40" height="15"/><rect x="48" y="385" width="40" height="15"/><rect x="92" y="385" width="40" height="15"/>
<rect x="6" y="403" width="40" height="15"/><rect x="48" y="403" width="40" height="15"/><rect x="92" y="403" width="40" height="15"/>
<rect x="6" y="420" width="40" height="15"/>
</g>
<rect x="6" y="410" width="40" height="8" fill="url(#act)"/>
<text x="26" y="342" font-size="10" font-weight="bold" fill="#ddd" text-anchor="middle">• • •</text>
<text class="b" x="68" y="342">Step ☰</text><text class="b" x="112" y="342">AM</text>
<text class="b" x="26" y="360">SAM</text><text class="b" x="68" y="360">ECSS-L</text><text class="b" x="112" y="360">ECSS-U</text>
<text class="b" x="26" y="377.500">CW-U</text><text class="b" x="68" y="377.500">CW-L</text><text class="b" x="112" y="377.500">BC-FM</text>
<text class="b" x="26" y="395">N-FM</text><text class="b" x="68" y="395">W-FM</text><text class="b" x="112" y="395">LSB</text>
<text x="26" y="413" font-size="8.200" font-weight="bold" fill="#f4f4f4" text-anchor="middle">USB</text><text class="b" x="68" y="413">Wide-L</text><text class="b" x="112" y="413">Wide-U</text>
<text class="b" x="26" y="430.500">DSB</text>

<rect x="0" y="442" width="194" height="11" fill="url(#hd)"/>
<text class="h" x="2" y="451">Filter</text><path d="M186 449h4l-2-2.500z" fill="#333"/>
<rect x="0" y="453" width="194" height="114" fill="#000"/>
<g fill="url(#btn)" stroke="#262626" stroke-width=".7">
<rect x="6" y="459" width="40" height="15"/><rect x="49" y="459" width="40" height="15"/><rect x="92" y="459" width="40" height="15"/>
<rect x="6" y="477" width="40" height="15"/><rect x="49" y="477" width="40" height="15"/><rect x="92" y="477" width="40" height="15"/>
<rect x="6" y="494" width="40" height="15"/><rect x="49" y="494" width="40" height="15"/><rect x="92" y="494" width="40" height="15"/>
<rect x="6" y="512" width="40" height="15"/><rect x="49" y="512" width="40" height="15"/><rect x="92" y="512" width="40" height="15"/>
<rect x="6" y="529" width="40" height="15"/><rect x="49" y="529" width="40" height="15"/><rect x="92" y="529" width="40" height="15"/>
<rect x="6" y="547" width="40" height="15"/><rect x="49" y="547" width="40" height="15"/>
</g>
<rect x="6" y="519" width="40" height="8" fill="url(#act)"/>
<text x="26" y="469" font-size="10" font-weight="bold" fill="#ddd" text-anchor="middle">• • •</text>
<text class="b" x="69" y="469">1.0kHz</text><text class="b" x="112" y="469">1.2kHz</text>
<text class="b" x="26" y="487">1.4kHz</text><text class="b" x="69" y="487">1.6kHz</text><text class="b" x="112" y="487">1.8kHz</text>
<text class="b" x="26" y="504.500">2.0kHz</text><text class="b" x="69" y="504.500">2.2kHz</text><text class="b" x="112" y="504.500">2.4kHz</text>
<text x="26" y="522" font-size="8.200" font-weight="bold" fill="#f4f4f4" text-anchor="middle">2.6kHz</text><text class="b" x="69" y="522">2.8kHz</text><text class="b" x="112" y="522">3.0kHz</text>
<text class="b" x="26" y="539.500">3.2kHz</text><text class="b" x="69" y="539.500">3.4kHz</text><text class="b" x="112" y="539.500">3.6kHz</text>
<text class="b" x="26" y="557">3.8kHz</text><text class="b" x="69" y="557">4.0kHz</text>

<rect x="0" y="568" width="194" height="58" fill="url(#hd)"/>
<text class="h" x="4" y="577.500">Radio</text><text class="h" x="2" y="589">AGC: Medium</text><text class="h" x="2" y="600.500">CW: Off</text><text class="h" x="2" y="611.500">Noise Blanker: Off</text><text class="h" x="2" y="623">NR1: Ephraim Malah 17dB</text>
<g fill="#333"><path d="M186 573h4l-2 2.500zM186 585h4l-2 2.500zM186 596h4l-2 2.500zM186 607h4l-2 2.500z"/><path d="M186 621h4l-2-2.500z"/></g>

<rect x="0" y="625" width="194" height="44" fill="#f2f2ee"/>
<g fill="#e4e4e2" stroke="#dcdcdc" stroke-width=".6"><rect x="3" y="627" width="23" height="16"/><rect x="55" y="627" width="21" height="16"/><rect x="81" y="627" width="21" height="16"/><rect x="107" y="627" width="21" height="16"/><rect x="133" y="627" width="22" height="16"/></g>
<rect x="29" y="627" width="22" height="16" fill="#cfe2f0" stroke="#8ab4d0" stroke-width=".7"/>
<g font-size="7.600" fill="#555" text-anchor="middle"><text x="14" y="638">Off</text><text x="40" y="638">NR1</text><text x="66" y="638">NR2</text><text x="92" y="638">NR3</text><text x="118" y="638">NR4</text><text x="144" y="638">NR5</text></g>
<text x="6" y="660" font-size="7.600" fill="#555">Level</text>
<rect x="34" y="656" width="100" height="1.500" fill="#d4d4d4"/>
<rect x="114" y="651" width="8" height="12" rx="1" fill="#dcdcdc" stroke="#aaa" stroke-width=".7"/>
<text x="157" y="660" font-size="7.600" fill="#555" text-anchor="middle">17 dB</text>

<rect x="0" y="669" width="194" height="22" fill="url(#hd)"/>
<text class="h" x="2" y="677.500">Notch: Off</text><text class="h" x="2" y="689">Squelch: Off</text>
<path d="M186 673h4l-2 2.500zM186 684h4l-2 2.500z" fill="#333"/>
<rect x="0" y="691" width="194" height="13" fill="#e4e4e2"/>

<!-- status bar -->
<rect y="704" width="1280" height="16" fill="#f0f0ec"/>
<rect y="719" width="1280" height="1" fill="#9a9a9a"/>
<text x="3" y="714.500" font-size="7.400" fill="#999">RX-666, BW = 16.000 MHz</text>
<rect x="892" y="708" width="9" height="8" fill="#4a8aa0"/><path d="M892 715l4-5 5 4" stroke="#fff" stroke-width=".7" fill="none"/>
<text class="s" x="904" y="715">--:02:53,</text>
<rect x="934" y="709" width="5" height="6" fill="#fff" stroke="#888" stroke-width=".6"/>
<text class="s" x="943" y="715">1369.8 MB (0)</text>
<text class="s" x="995" y="715">CPU: 19.5%</text><rect x="1039" y="709" width="3" height="6" fill="#38c048"/><rect x="1042" y="709" width="17" height="6" fill="#e6e6e4"/>
<text class="s" x="1066" y="715">GPU: 32.4%</text><rect x="1110" y="709" width="6" height="6" fill="#20b830"/><rect x="1116" y="709" width="13" height="6" fill="#e6e6e4"/>
<text class="s" x="1137" y="715">Audio: 10ms</text><rect x="1184" y="709" width="22" height="6" fill="#e6e6e4"/>
<text class="s" x="1212" y="715">Size: 3.4 GB</text><rect x="1256" y="709" width="18" height="6" fill="#e6e6e4"/>

<!-- video artifact line -->
<path d="M4.500 30V704" stroke="#777" stroke-width=".8" opacity=".55"/>
</svg>
</body></html>
